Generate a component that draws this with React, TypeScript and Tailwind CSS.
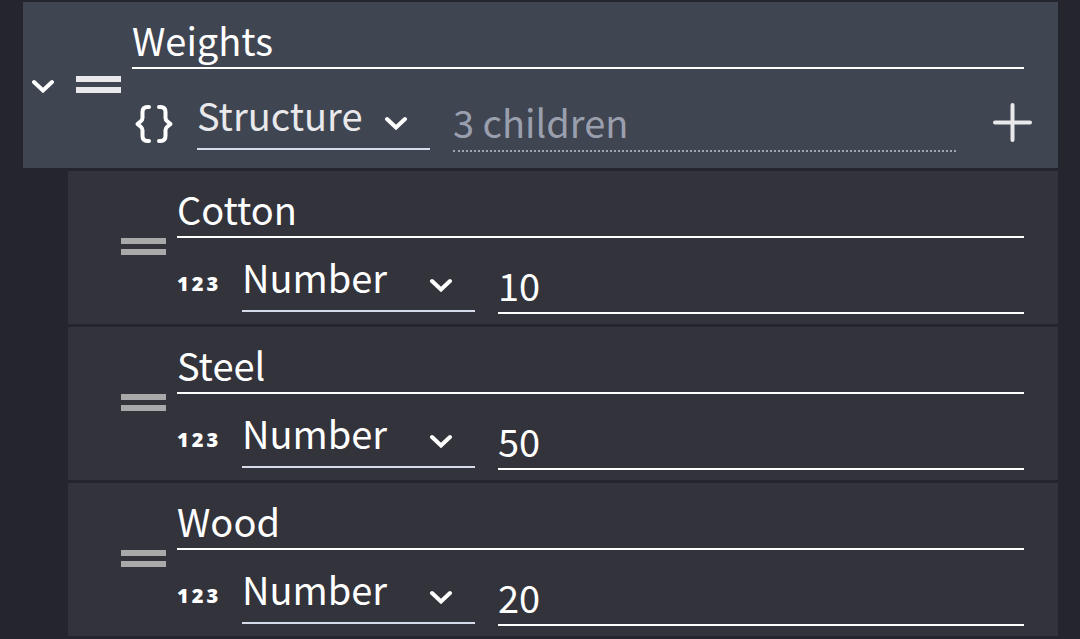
import { useState } from 'react';

type Child = { name: string; value: string };

const initialChildren: Child[] = [
  { name: 'Cotton', value: '10' },
  { name: 'Steel', value: '50' },
  { name: 'Wood', value: '20' },
];

function Chevron() {
  return (
    <svg viewBox="0 0 24 14" className="h-[14px] w-6" fill="none" stroke="currentColor" strokeWidth="4" strokeLinecap="round" aria-hidden="true">
      <path d="M3 3 L12 11.5 L21 3" strokeLinejoin="miter" />
    </svg>
  );
}

function DragHandle({ label, className }: { label: string; className: string }) {
  return (
    <button type="button" aria-label={label} className={`flex w-[45px] shrink-0 cursor-grab flex-col gap-[5px] pb-[2px] ${className}`}>
      <span className="h-[6px] w-full bg-current" />
      <span className="h-[6px] w-full bg-current" />
    </button>
  );
}

function Braces() {
  return (
    <svg viewBox="0 0 40 40" className="h-10 w-10" fill="none" stroke="currentColor" strokeWidth="4" strokeLinecap="round" strokeLinejoin="round" aria-hidden="true">
      <path d="M15 3 H13.500 Q8.500 3 8.500 8 V14 Q8.500 16 6.500 17.500 L3.500 20 L6.500 22.500 Q8.500 24 8.500 26 V32 Q8.500 37 13.500 37 H15" />
      <path d="M25 3 H26.500 Q31.500 3 31.500 8 V14 Q31.500 16 33.500 17.500 L36.500 20 L33.500 22.500 Q31.500 24 31.500 26 V32 Q31.500 37 26.500 37 H25" />
    </svg>
  );
}

function Digits() {
  return (
    <span className="flex gap-[3px] font-['Noto_Sans',sans-serif] text-[20px] leading-6 font-black" aria-hidden="true">
      <span>1</span>
      <span>2</span>
      <span>3</span>
    </span>
  );
}

function NameInput({ value, label }: { value: string; label: string }) {
  return (
    <input
      aria-label={label}
      defaultValue={value}
      className="h-[55px] w-full min-w-0 border-b-2 border-white bg-transparent pb-[3px] outline-none"
    />
  );
}

function TypeSelect({ value, label, className }: { value: string; label: string; className: string }) {
  return (
    <div className={`grid w-[233px] shrink-0 grid-cols-1 ${className}`}>
      <select
        aria-label={label}
        defaultValue={value}
        className="col-start-1 row-start-1 h-[60px] w-full appearance-none border-b-2 border-[#d5dbea] bg-transparent pb-2 outline-none"
      >
        <option>Number</option>
        <option>Structure</option>
      </select>
      <span className="pointer-events-none col-start-1 row-start-1 mt-[6px] mr-[22px] self-center justify-self-end text-white">
        <Chevron />
      </span>
    </div>
  );
}

function ChildRow({ child }: { child: Child }) {
  return (
    <li className="flex items-center bg-[#33333b] pr-[34px] pl-[53px]">
      <DragHandle label={`Move ${child.name}`} className="text-[#a9a9a9]" />
      <div className="ml-[11px] min-w-0 grow pt-3 pb-[10px]">
        <NameInput value={child.name} label="Name" />
        <div className="mt-4 flex h-[60px] items-start">
          <span className="flex h-[60px] w-[65px] shrink-0 items-center">
            <Digits />
          </span>
          <TypeSelect value="Number" label={`Type of ${child.name}`} className="-mt-[2px]" />
          <input
            aria-label={`Value of ${child.name}`}
            defaultValue={child.value}
            inputMode="numeric"
            className="ml-[23px] h-[60px] w-full min-w-0 border-b-2 border-white bg-transparent pt-[2px] outline-none"
          />
        </div>
      </div>
    </li>
  );
}

export default function App() {
  const [open, setOpen] = useState(true);
  return (
    <main className="min-h-screen bg-[#25252d] pt-[2px] pr-[22px] pb-[3px] pl-[23px] font-['Noto_Sans_CJK_SC',sans-serif] text-[38px] leading-[50px] text-white">
      <section className="flex items-center bg-[#404552] pr-[34px] pl-2">
        <button type="button" aria-label="Toggle children" aria-expanded={open} onClick={() => setOpen(!open)} className="mr-[21px] shrink-0 pt-[2px]">
          <Chevron />
        </button>
        <DragHandle label="Move Weights" className="text-[#e9e9ec]" />
        <div className="ml-[11px] min-w-0 grow pt-3 pb-4">
          <NameInput value="Weights" label="Name" />
          <div className="mt-[23px] flex h-[60px] items-start">
            <span className="flex h-[60px] w-[65px] shrink-0 items-center pt-1 pl-[2px]">
              <Braces />
            </span>
            <TypeSelect value="Structure" label="Type of Weights" className="-mt-[2px] text-[#e9e9ec]" />
            <p className="mr-[37px] ml-[23px] h-[60px] grow border-b-2 border-dotted border-[#a0a5b4] pt-[5px] text-[#9a9fae]">
              3 children
            </p>
            <button type="button" aria-label="Add child" className="-mr-2 flex h-[60px] shrink-0 items-center text-[#e9e9ec]">
              <svg viewBox="0 0 39 39" className="h-[39px] w-[39px]" stroke="currentColor" strokeWidth="4" strokeLinecap="round" aria-hidden="true">
                <path d="M19.500 2 V37 M2 19.500 H37" />
              </svg>
            </button>
          </div>
        </div>
      </section>
      {open && (
        <ul className="mt-[3px] ml-[45px] flex flex-col gap-[3px]">
          {initialChildren.map((child) => (
            <ChildRow key={child.name} child={child} />
          ))}
        </ul>
      )}
    </main>
  );
}
